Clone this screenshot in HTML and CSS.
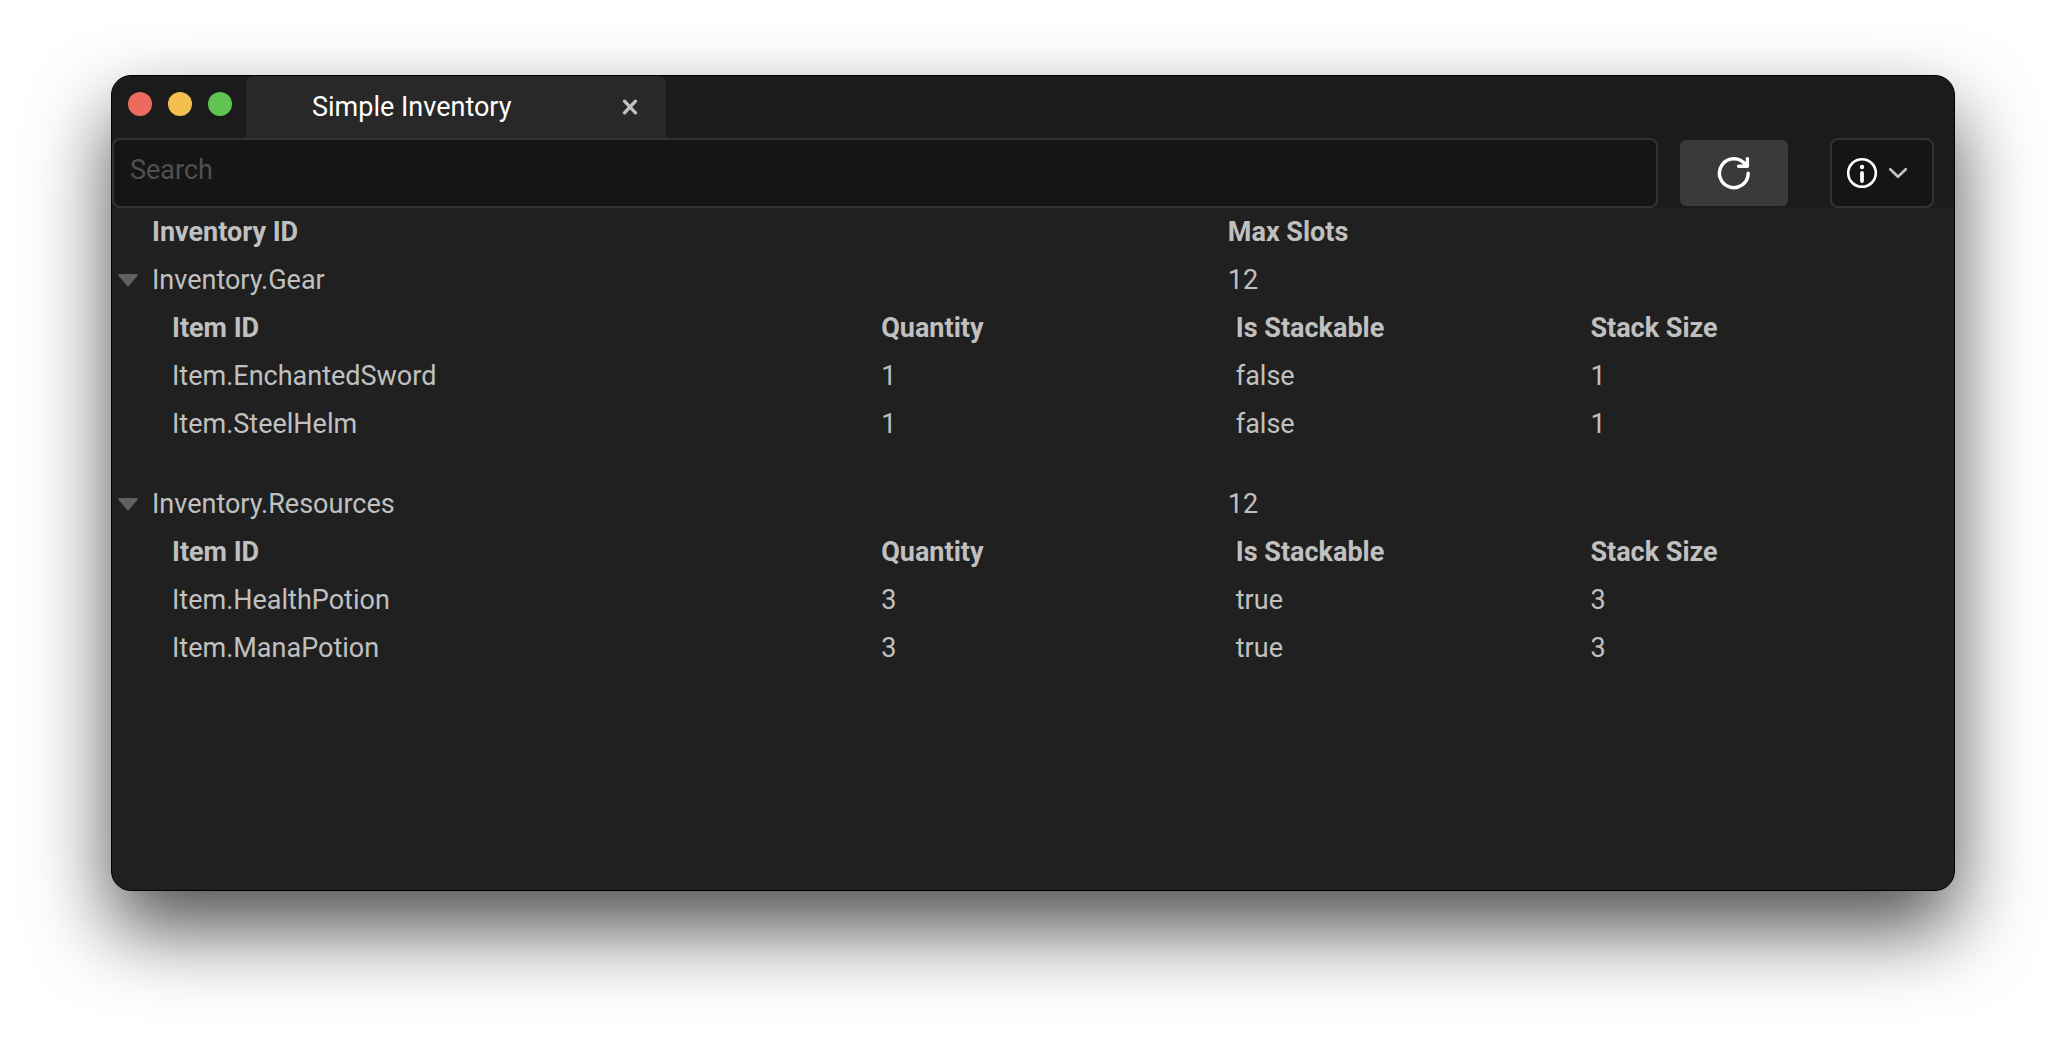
FILE: index.html
```
<!DOCTYPE html>
<html lang="en">
<head>
<meta charset="utf-8">
<title>Simple Inventory</title>
<link rel="stylesheet" href="styles.css">
</head>
<body>
<main class="window">
  <header class="titlebar">
    <div class="lights">
      <button class="light light-close" aria-label="Close window"></button>
      <button class="light light-minimize" aria-label="Minimize window"></button>
      <button class="light light-zoom" aria-label="Zoom window"></button>
    </div>
    <div class="tab">
      <h1 class="tab-title">Simple Inventory</h1>
      <button class="tab-close" aria-label="Close tab">
        <svg width="16" height="16" viewBox="0 0 16 16"><path d="M2.5 2.2 13.5 13.8M13.5 2.2 2.5 13.8"/></svg>
      </button>
    </div>
  </header>

  <div class="toolbar">
    <input class="search" type="text" placeholder="Search" aria-label="Search">
    <button class="refresh" aria-label="Refresh">
      <svg width="36" height="36" viewBox="0 0 36 36"><path d="M32.2 18.2A14.4 14.4 0 1 1 29.5 9.8M31.4 3.6V11.2H22.6"/></svg>
    </button>
    <button class="info" aria-label="Information">
      <svg width="32" height="32" viewBox="0 0 32 32">
        <circle class="ring" cx="16" cy="16" r="13.8"/>
        <circle class="dot" cx="16" cy="10" r="2.2"/>
        <path class="stem" d="M16 16V24"/>
      </svg>
      <svg class="chevron" width="20" height="12" viewBox="0 0 20 12"><path d="M2.2 2.2 10 9.8 17.8 2.2"/></svg>
    </button>
  </div>

  <table class="inventories">
    <thead>
      <tr class="row"><td></td><th scope="col">Inventory ID</th><th scope="col">Max Slots</th></tr>
    </thead>
    <tbody class="group">
      <tr class="row">
        <td><button class="expander" aria-label="Collapse Inventory.Gear" aria-expanded="true"><svg width="20" height="13" viewBox="0 0 20 13"><path d="M1.5 0H18.5Q20.5 .4 19.4 2L11 11.8Q10 12.8 9 11.8L.6 2Q-.5 .4 1.5 0Z"/></svg></button></td>
        <td>Inventory.Gear</td><td>12</td>
      </tr>
      <tr class="details"><td colspan="3">
        <table class="items">
          <thead><tr><th class="item-id" scope="col">Item ID</th><th scope="col">Quantity</th><th scope="col">Is Stackable</th><th scope="col">Stack Size</th></tr></thead>
          <tbody>
            <tr><td>Item.EnchantedSword</td><td>1</td><td>false</td><td>1</td></tr>
            <tr><td>Item.SteelHelm</td><td>1</td><td>false</td><td>1</td></tr>
          </tbody>
        </table>
      </td></tr>
    </tbody>
    <tbody class="group">
      <tr class="row">
        <td><button class="expander" aria-label="Collapse Inventory.Resources" aria-expanded="true"><svg width="20" height="13" viewBox="0 0 20 13"><path d="M1.5 0H18.5Q20.5 .4 19.4 2L11 11.8Q10 12.8 9 11.8L.6 2Q-.5 .4 1.5 0Z"/></svg></button></td>
        <td>Inventory.Resources</td><td>12</td>
      </tr>
      <tr class="details"><td colspan="3">
        <table class="items">
          <thead><tr><th class="item-id" scope="col">Item ID</th><th scope="col">Quantity</th><th scope="col">Is Stackable</th><th scope="col">Stack Size</th></tr></thead>
          <tbody>
            <tr><td>Item.HealthPotion</td><td>3</td><td>true</td><td>3</td></tr>
            <tr><td>Item.ManaPotion</td><td>3</td><td>true</td><td>3</td></tr>
          </tbody>
        </table>
      </td></tr>
    </tbody>
  </table>
</main>
</body>
</html>
```
FILE: styles.css
```
* {
  box-sizing: border-box;
}

body {
  margin: 0;
  min-height: 100vh;
  padding: 75px 111px 147px;
  display: flex;
  background: #fff;
  color: #c0c0c0;
  font: 27px/48px Roboto, sans-serif;
}

button,
input {
  margin: 0;
  padding: 0;
  border: 0;
  background: none;
  color: inherit;
  font: inherit;
}

svg {
  display: block;
  fill: none;
  stroke-linecap: round;
  stroke-linejoin: round;
}

.window {
  flex: 1;
  min-width: 0;
  border: 1px solid #000;
  border-radius: 20px;
  overflow: hidden;
  background: #202020;
  box-shadow: 0 38px 80px rgba(0, 0, 0, 0.69);
}

/* Title bar */
.titlebar {
  display: flex;
  height: 62px;
  background: #1b1b1b;
}

.lights {
  display: flex;
  gap: 16px;
  padding: 16px 14px 0 16px;
}

.light {
  width: 24px;
  height: 24px;
  border-radius: 50%;
}

.light-close { background: #ed6a5e; }
.light-minimize { background: #f5bf4f; }
.light-zoom { background: #61c554; }

.tab {
  display: flex;
  align-items: center;
  justify-content: space-between;
  width: 420px;
  padding: 0 28px 0 66px;
  border-radius: 8px 8px 0 0;
  background: #282828;
}

.tab-title {
  margin: 0;
  color: #fff;
  font-size: 27px;
  font-weight: 400;
}

.tab-close svg {
  stroke: #c0c0c0;
  stroke-width: 3.4;
}

/* Toolbar */
.toolbar {
  display: flex;
  align-items: center;
  height: 70px;
  padding-right: 20px;
  background: #1b1b1b;
}

.search {
  flex: 1;
  min-width: 0;
  height: 70px;
  padding: 0 16px 6px;
  border: 2px solid #333;
  border-radius: 8px;
  background: #151515;
}

.search::placeholder {
  color: #505050;
  opacity: 1;
}

.refresh {
  display: grid;
  place-items: center;
  width: 108px;
  height: 66px;
  margin: 0 42px 0 22px;
  border-radius: 6px;
  background: #3a3a3a;
}

.refresh svg {
  stroke: #fff;
  stroke-width: 3.4;
}

.info {
  display: flex;
  align-items: center;
  gap: 10px;
  width: 104px;
  height: 70px;
  padding-left: 14px;
  border: 2px solid #333;
  border-radius: 8px;
  background: #151515;
}

.ring {
  stroke: #fff;
  stroke-width: 2.6;
}

.dot {
  fill: #fff;
}

.stem {
  stroke: #fff;
  stroke-width: 3.8;
}

.chevron {
  stroke: #c0c0c0;
  stroke-width: 2.6;
}

/* Inventory tree */
.inventories {
  display: block;
  padding-right: 9px;
}

.inventories thead,
.group {
  display: block;
}

.group + .group {
  margin-top: 32px;
}

.row {
  display: grid;
  grid-template-columns: 40px 3fr 2fr;
}

.details,
.details > td {
  display: block;
}

.details > td {
  padding-left: 60px;
}

th,
td {
  padding: 0;
  text-align: left;
}

th {
  font-weight: 700;
}

.expander {
  display: flex;
  align-items: center;
  height: 48px;
  padding-left: 6px;
}

.expander svg {
  fill: #606060;
}

.items {
  width: 100%;
  table-layout: fixed;
  border-collapse: collapse;
}

.items thead {
  display: table-header-group;
}

.item-id {
  width: 40%;
}
```
